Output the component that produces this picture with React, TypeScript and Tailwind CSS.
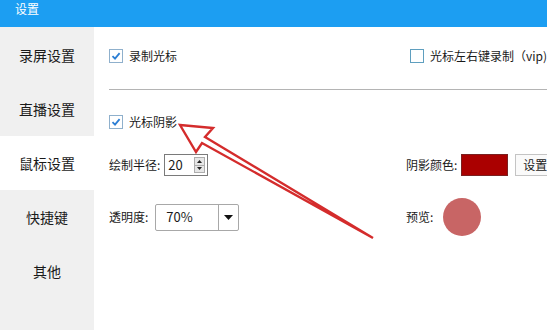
import React from 'react';

const font = { fontFamily: '"Noto Sans CJK SC", "Noto Sans", sans-serif' };

const navItems = ['录屏设置', '直播设置', '鼠标设置', '快捷键', '其他'];

const CheckBox = ({ checked }: { checked: boolean }) => (
  <span
    className={`flex h-[14px] w-[14px] shrink-0 items-center justify-center border bg-white ${
      checked ? 'border-[#8fb0cc]' : 'border-[#5f9fbf]'
    }`}
  >
    {checked && (
      <svg width="10" height="10" viewBox="0 0 10 10">
        <path d="M1.5 5.2 L4 7.6 L8.6 2.2" fill="none" stroke="#2b7ed4" strokeWidth="1.8" />
      </svg>
    )}
  </span>
);

const App = () => {
  return (
    <div className="relative h-[330px] w-[547px] overflow-hidden bg-white text-[#1a1a1a]" style={font}>
      <div className="h-[27px] bg-[#1c9ef2] pl-[15px] pt-[1px] text-[12px] leading-[16px] text-white">设置</div>
      <div className="flex h-[303px]">
        <div className="w-[94px] shrink-0 bg-[#f0f0f0] pt-[1px]">
          {navItems.map((item) => (
            <div
              key={item}
              className={`flex h-[54px] items-center justify-center text-[14px] ${
                item === '鼠标设置' ? 'bg-white' : ''
              }`}
            >
              {item}
            </div>
          ))}
        </div>

        <div className="min-w-0 flex-1 whitespace-nowrap pl-[15px] text-[12px]">
          <div className="mt-[19px] flex h-[20px] items-center">
            <div className="flex w-[301px] shrink-0 items-center gap-[6px]">
              <CheckBox checked />
              <span>录制光标</span>
            </div>
            <div className="flex shrink-0 items-center gap-[6px]">
              <CheckBox checked={false} />
              <span>光标左右键录制（vip)</span>
            </div>
          </div>

          <div className="mt-[23px] h-px bg-[#b4b4b4]" />

          <div className="mt-[22px] flex h-[20px] items-center gap-[6px]">
            <CheckBox checked />
            <span>光标阴影</span>
          </div>

          <div className="mt-[22px] flex h-[22px] items-center">
            <div className="flex w-[297px] shrink-0 items-center gap-[4px]">
              <span>绘制半径:</span>
              <div className="flex h-[22px] w-[44px] items-center justify-between border border-[#7a7a7a] pl-[3px] pr-[2px]">
                <span className="text-[13px]">20</span>
                <div className="flex h-[16px] w-[11px] flex-col border border-[#adadad] bg-[#e6e6e6]">
                  <div className="flex flex-1 items-center justify-center border-b border-[#adadad]">
                    <svg width="5" height="3" viewBox="0 0 5 3">
                      <path d="M0 3 L2.5 0 L5 3 Z" fill="#222" />
                    </svg>
                  </div>
                  <div className="flex flex-1 items-center justify-center">
                    <svg width="5" height="3" viewBox="0 0 5 3">
                      <path d="M0 0 L5 0 L2.5 3 Z" fill="#222" />
                    </svg>
                  </div>
                </div>
              </div>
            </div>
            <div className="flex shrink-0 items-center">
              <span>阴影颜色:</span>
              <div className="ml-[4px] h-[22px] w-[47px] shrink-0 border border-[#7a2020] bg-[#aa0000]" />
              <div className="ml-[7px] flex h-[22px] w-[40px] shrink-0 items-center border border-[#c4c4c4] bg-[#fafafa] pl-[7px]">
                设置
              </div>
            </div>
          </div>

          <div className="mt-[22px] flex h-[38px] items-center">
            <div className="flex w-[297px] shrink-0 items-center gap-[7px]">
              <span>透明度:</span>
              <div className="flex h-[27px] w-[84px] items-center rounded-[2px] border border-[#a8a8a8]">
                <span className="flex-1 pl-[10px] text-[13px]">70%</span>
                <div className="flex h-full w-[20px] items-center justify-center border-l border-[#a8a8a8]">
                  <svg width="9" height="5" viewBox="0 0 9 5">
                    <path d="M0 0 L9 0 L4.5 5 Z" fill="#111" />
                  </svg>
                </div>
              </div>
            </div>
            <div className="flex shrink-0 items-center">
              <span>预览:</span>
              <div className="ml-[10px] h-[38px] w-[38px] rounded-full bg-[#c86565]" />
            </div>
          </div>
        </div>
      </div>

      <svg className="pointer-events-none absolute left-0 top-0" width="547" height="330">
        <polygon
          points="180,125 213,128 205,137 373,238 202,143 196,152"
          fill="none"
          stroke="#d42c2c"
          strokeWidth="2.4"
          strokeLinejoin="miter"
        />
      </svg>
    </div>
  );
};

export default App;
